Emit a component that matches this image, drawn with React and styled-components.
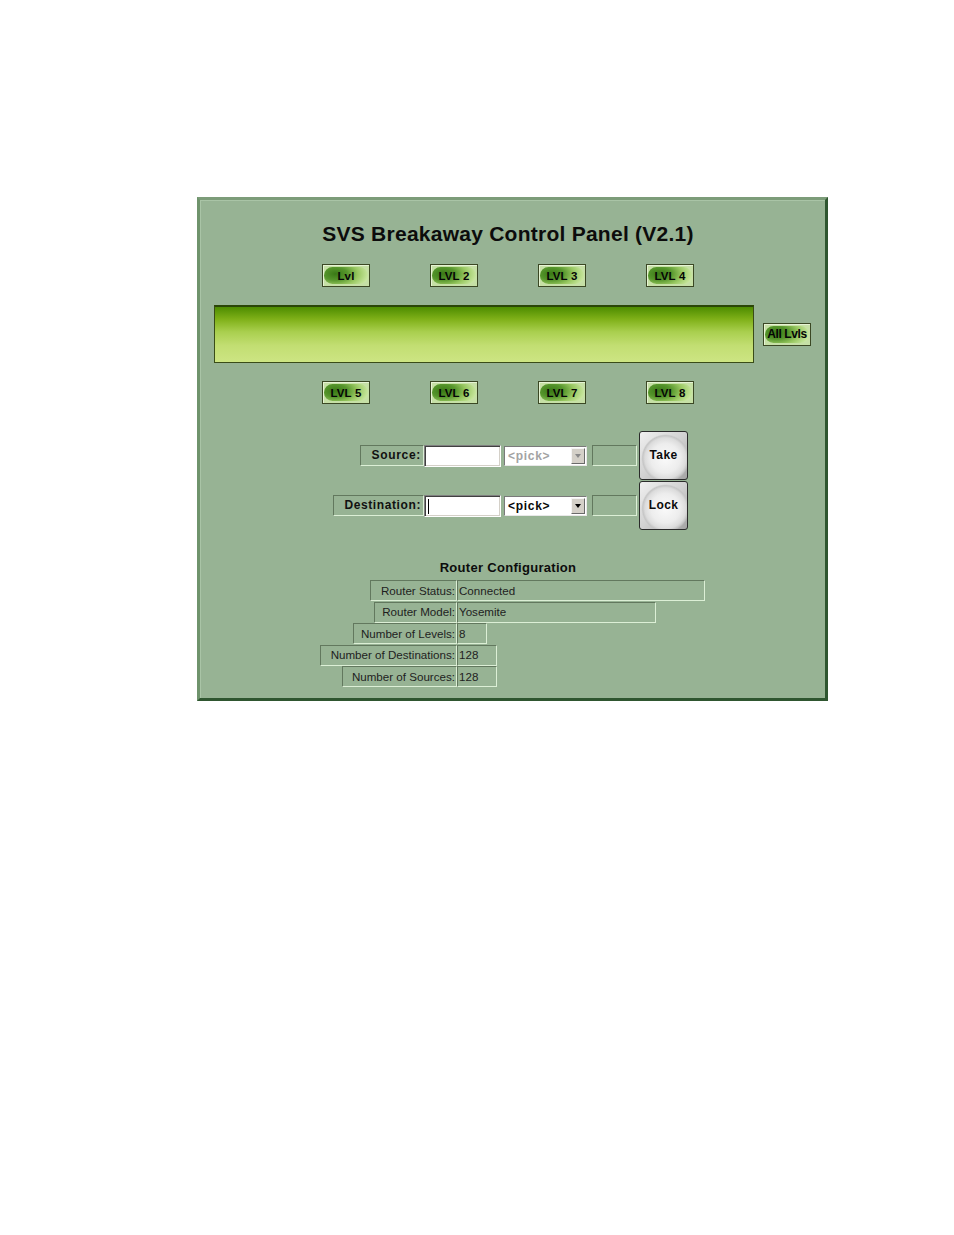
import React from "react";
import styled, { createGlobalStyle } from "styled-components";

const Global = createGlobalStyle`
  html, body { margin: 0; padding: 0; background: #fff; }
  body { font-family: "Liberation Sans", Arial, sans-serif; color: #111; }
`;

const Page = styled.div`
  padding: 197px 0 0 197px;
  min-height: 1235px;
  box-sizing: border-box;
`;

const Panel = styled.div`
  width: 631px;
  height: 504px;
  box-sizing: border-box;
  background: #97b394;
  border: 3px solid;
  border-color: #7c9c79 #2f5630 #2f5630 #6f936c;
  box-shadow: inset 1px 1px 0 #a9c4a6;
  display: flex;
  flex-direction: column;
  align-items: flex-start;
`;

const Title = styled.h1`
  align-self: stretch;
  margin: 23px 9px 0 0;
  font-size: 21px;
  line-height: 21px;
  font-weight: bold;
  letter-spacing: 0.25px;
  text-align: center;
  color: #0c0c0c;
`;

const LevelRow = styled.div`
  display: flex;
  gap: 60px;
  margin: ${(p) => p.top}px 0 0 122px;
`;

const LevelButton = styled.button`
  width: 48px;
  height: 23px;
  padding: 2px 1px;
  box-sizing: border-box;
  border: 1px solid #3b4824;
  background: #c6e0a6;
  box-shadow: inset 1px 1px 0 #e6f4d4;
  display: flex;
  cursor: pointer;
`;

const Pill = styled.span`
  flex: 1;
  border-radius: 9px;
  background:
    radial-gradient(ellipse 80% 110% at 26% 40%, #3a7916 0%, #56962c 34%, #99c862 64%, #d2edab 100%);
  display: flex;
  align-items: center;
  justify-content: center;
  font-family: "Liberation Sans", Arial, sans-serif;
  font-size: ${(p) => p.size || 11.5}px;
  font-weight: bold;
  letter-spacing: ${(p) => (p.tight ? "-0.4px" : "0.2px")};
  color: #050505;
  white-space: nowrap;
`;

const BarRow = styled.div`
  display: flex;
  align-items: center;
  gap: 9px;
  margin: 18px 0 0 14px;
`;

const Meter = styled.div`
  width: 540px;
  height: 58px;
  box-sizing: border-box;
  border: 1px solid #3a4c18;
  border-top: 2px solid #2a4606;
  background: linear-gradient(
    to bottom,
    #4d8c00 0%,
    #7fb018 22%,
    #a9cf4e 45%,
    #c2de72 70%,
    #cde583 100%
  );
`;

const Controls = styled.div`
  display: grid;
  grid-template-columns: 89px 80px 88px 47px 49px;
  grid-template-rows: 49px 49px;
  row-gap: 1px;
  align-items: center;
  margin: 27px 0 0 135px;
`;

const Inset = styled.div`
  box-sizing: border-box;
  height: 21px;
  border-style: solid;
  border-width: 1px;
  border-color: #62785e #dcefd6 #dcefd6 #62785e;
`;

const FieldLabel = styled(Inset)`
  justify-self: end;
  padding: 0 2px 1px 10px;
  display: flex;
  align-items: center;
  font-size: 12px;
  font-weight: bold;
  letter-spacing: ${(p) => p.spacing}px;
  color: #111;
`;

const TextBox = styled.div`
  position: relative;
  width: 77px;
  height: 22px;
  box-sizing: border-box;
  background: #fff;
  border: 1px solid;
  border-color: #808080 #ffffff #ffffff #808080;
  box-shadow: inset 1px 1px 0 #404040, inset -1px -1px 0 #d4d0c8;
`;

const Caret = styled.span`
  position: absolute;
  left: 3px;
  top: 3px;
  width: 1px;
  height: 15px;
  background: #000;
`;

const Select = styled.div`
  width: 83px;
  height: 20px;
  box-sizing: border-box;
  background: #fff;
  border: 1px solid;
  border-color: #7a7a7a #e8e8e8 #e8e8e8 #7a7a7a;
  display: flex;
  align-items: center;
  justify-content: space-between;
  padding: 0 1px 0 3px;
  font-size: 12px;
  font-weight: bold;
  letter-spacing: 0.7px;
  color: ${(p) => (p.disabled ? "#a3a3a3" : "#0a0a0a")};
`;

const Arrow = styled.span`
  width: 14px;
  height: 16px;
  box-sizing: border-box;
  background: #d4d0c8;
  border: 1px solid;
  border-color: #f4f4f4 #6a6a6a #6a6a6a #f4f4f4;
  display: flex;
  align-items: center;
  justify-content: center;

  &::after {
    content: "";
    border-left: 3.5px solid transparent;
    border-right: 3.5px solid transparent;
    border-top: 4px solid ${(p) => (p.disabled ? "#8a8a8a" : "#000")};
  }
`;

const Blank = styled(Inset)`
  width: 45px;
`;

const BigButton = styled.button`
  grid-column: 5;
  grid-row: ${(p) => p.row};
  width: 49px;
  height: 49px;
  padding: 0 0 2px;
  box-sizing: border-box;
  border: 1px solid #2b2b2b;
  border-radius: 3px;
  background:
    radial-gradient(circle at 54% 56%, #fafafa 0%, #ededed 40%, #dcdcdc 56%, #c6c6c6 62%, rgba(0,0,0,0) 66%),
    linear-gradient(135deg, #f0f0f0 0%, #d2d2d2 50%, #a4a4a4 100%);
  font-family: "Liberation Sans", Arial, sans-serif;
  font-size: 12px;
  font-weight: bold;
  letter-spacing: 0.4px;
  color: #0a0a0a;
  cursor: pointer;
`;

const ConfigTitle = styled.h2`
  align-self: stretch;
  margin: 31px 9px 0 0;
  font-size: 13px;
  line-height: 13px;
  font-weight: bold;
  letter-spacing: 0.3px;
  text-align: center;
  color: #0c0c0c;
`;

const ConfigGrid = styled.div`
  display: grid;
  grid-template-columns: 137px auto;
  grid-auto-rows: 21px;
  row-gap: 0.5px;
  margin: 6px 0 0 120px;
`;

const Cell = styled(Inset)`
  width: ${(p) => p.w}px;
  justify-self: ${(p) => (p.label ? "end" : "start")};
  display: flex;
  align-items: center;
  justify-content: ${(p) => (p.label ? "flex-end" : "flex-start")};
  padding: ${(p) => (p.label ? "0 1px 1px 0" : "0 0 1px 1px")};
  font-size: 11.6px;
  color: #1e1e1e;
  white-space: nowrap;
`;

const topLevels = ["Lvl", "LVL 2", "LVL 3", "LVL 4"];
const bottomLevels = ["LVL 5", "LVL 6", "LVL 7", "LVL 8"];

const config = [
  { label: "Router Status:", value: "Connected", lw: 87, vw: 248 },
  { label: "Router Model:", value: "Yosemite", lw: 83, vw: 199 },
  { label: "Number of Levels:", value: "8", lw: 104, vw: 30 },
  { label: "Number of Destinations:", value: "128", lw: 137, vw: 40 },
  { label: "Number of Sources:", value: "128", lw: 115, vw: 40 },
];

export default function App() {
  return (
    <Page>
      <Global />
      <Panel>
        <Title>SVS Breakaway Control Panel (V2.1)</Title>

        <LevelRow top={20}>
          {topLevels.map((l) => (
            <LevelButton key={l}>
              <Pill>{l}</Pill>
            </LevelButton>
          ))}
        </LevelRow>

        <BarRow>
          <Meter />
          <LevelButton>
            <Pill size={12} tight>All Lvls</Pill>
          </LevelButton>
        </BarRow>

        <LevelRow top={18}>
          {bottomLevels.map((l) => (
            <LevelButton key={l}>
              <Pill>{l}</Pill>
            </LevelButton>
          ))}
        </LevelRow>

        <Controls>
          <FieldLabel spacing={0.7}>Source:</FieldLabel>
          <TextBox />
          <Select disabled>
            &lt;pick&gt;
            <Arrow disabled />
          </Select>
          <Blank />
          <BigButton row={1}>Take</BigButton>

          <FieldLabel spacing={0.6}>Destination:</FieldLabel>
          <TextBox>
            <Caret />
          </TextBox>
          <Select>
            &lt;pick&gt;
            <Arrow />
          </Select>
          <Blank />
          <BigButton row={2}>Lock</BigButton>
        </Controls>

        <ConfigTitle>Router Configuration</ConfigTitle>
        <ConfigGrid>
          {config.map((c) => (
            <React.Fragment key={c.label}>
              <Cell label w={c.lw}>{c.label}</Cell>
              <Cell w={c.vw}>{c.value}</Cell>
            </React.Fragment>
          ))}
        </ConfigGrid>
      </Panel>
    </Page>
  );
}
